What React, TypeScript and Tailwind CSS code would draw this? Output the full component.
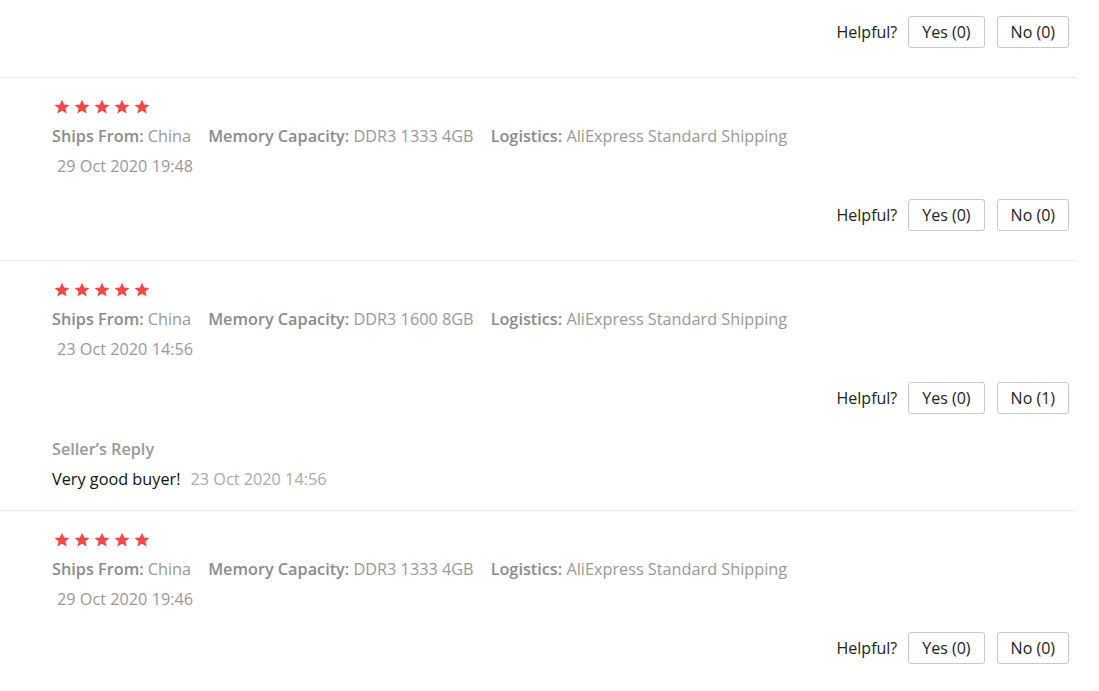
const reviews = [
  {
    capacity: 'DDR3 1333 4GB',
    date: '29 Oct 2020 19:48',
    yes: 0,
    no: 0,
  },
  {
    capacity: 'DDR3 1600 8GB',
    date: '23 Oct 2020 14:56',
    yes: 0,
    no: 1,
    reply: { text: 'Very good buyer!', date: '23 Oct 2020 14:56' },
  },
  {
    capacity: 'DDR3 1333 4GB',
    date: '29 Oct 2020 19:46',
    yes: 0,
    no: 0,
  },
];

function Star() {
  return (
    <svg width="16" height="16" viewBox="0 0 24 24">
      <path
        d="M12 1l3.2 7.3 7.9.6-6 5.2 1.9 7.8L12 17.7l-7 4.2 1.9-7.8-6-5.2 7.9-.6z"
        fill="#f44848"
      />
    </svg>
  );
}

function Helpful({ yes, no }: { yes: number; no: number }) {
  return (
    <div className="flex items-center justify-end pr-[7px]">
      <span className="mr-[11px] text-[16px] text-[#222]">Helpful?</span>
      <button className="h-[32px] rounded-[3px] border border-[#c8c8c8] bg-white px-[13px] text-[16px] text-[#222]">
        Yes ({yes})
      </button>
      <button className="ml-[12px] h-[32px] rounded-[3px] border border-[#c8c8c8] bg-white px-[13px] text-[16px] text-[#222]">
        No ({no})
      </button>
    </div>
  );
}

export default function App() {
  return (
    <div
      className="w-[1076px] bg-white"
      style={{ fontFamily: '"Open Sans", "Liberation Sans", sans-serif' }}
    >
      <div className="border-b border-[#e8e8e8] pt-[16px] pb-[29px]">
        <Helpful yes={0} no={0} />
      </div>

      {reviews.map((r, i) => (
        <div
          key={i}
          className={`border-b border-[#e8e8e8] pt-[21px] pl-[52px] ${r.reply ? 'pb-[16px]' : 'pb-[29px]'}`}
        >
          <div className="flex h-[16px] gap-[4px] pl-[2px]">
            {[0, 1, 2, 3, 4].map((s) => (
              <Star key={s} />
            ))}
          </div>
          <div className="mt-[6px] flex text-[16.25px] leading-[30px] text-[#999]">
            <span className="mr-[17px]">
              <span className="font-semibold text-[#8c8c8c]">Ships From:</span> China
            </span>
            <span className="mr-[17px]">
              <span className="font-semibold text-[#8c8c8c]">Memory Capacity:</span> {r.capacity}
            </span>
            <span>
              <span className="font-semibold text-[#8c8c8c]">Logistics:</span> AliExpress Standard Shipping
            </span>
          </div>
          <div className="pl-[5px] text-[16.25px] leading-[31px] text-[#999]">{r.date}</div>
          <div className="mt-[17px]">
            <Helpful yes={r.yes} no={r.no} />
          </div>
          {r.reply && (
            <div className="mt-[20px] text-[16.25px] leading-[30px]">
              <div className="font-semibold text-[#999]">Seller’s Reply</div>
              <div className="text-[#111]">
                {r.reply.text}
                <span className="ml-[10px] text-[#aaa]">{r.reply.date}</span>
              </div>
            </div>
          )}
        </div>
      ))}
    </div>
  );
}
